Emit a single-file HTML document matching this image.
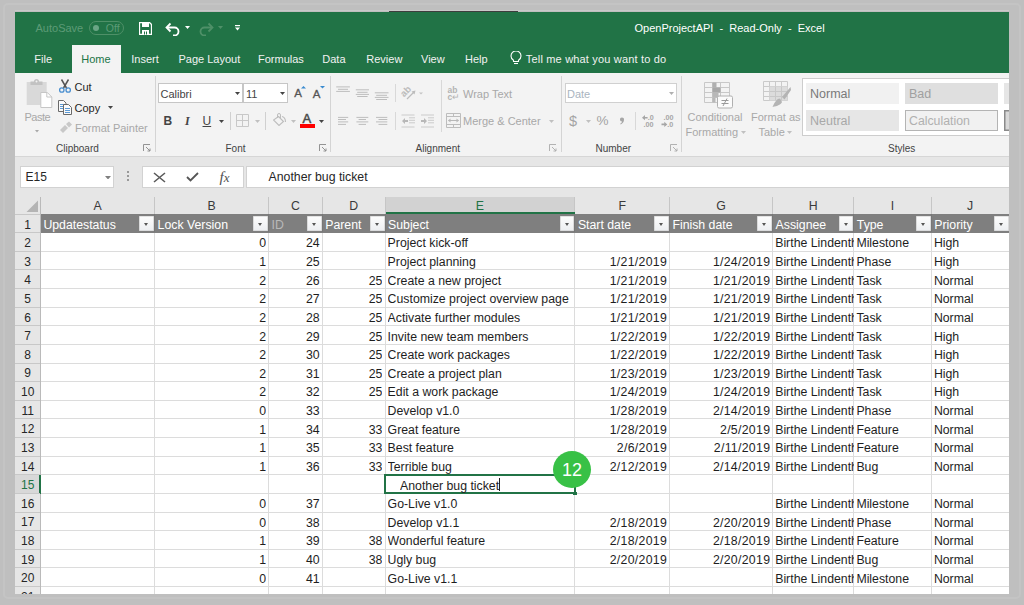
<!DOCTYPE html>
<html><head><meta charset="utf-8">
<style>
html,body{margin:0;padding:0}
body{width:1024px;height:605px;background:#bfbfbf;position:relative;overflow:hidden;font-family:"Liberation Sans",sans-serif}
#win{position:absolute;left:15px;top:12px;width:994px;height:582px;overflow:hidden;background:#e6e6e6}
#in{position:absolute;left:-15px;top:-12px;width:1024px;height:605px}
#in div,#in span,#in svg{position:absolute}
.t{white-space:nowrap;line-height:14px}
.tab{top:52px;font-size:11px;color:#f2f2f2;white-space:nowrap;line-height:14px}
.rl{font-size:11px;color:#444;white-space:nowrap;line-height:14px}
.dis{color:#a8a8a8}
.gl{font-size:10px;color:#444;white-space:nowrap;line-height:12px;top:143px}
.gsep{top:76px;width:1px;height:76px;background:#d4d4d4}
.launch{top:144px}
.colhdr{left:15px;top:188px;width:994px;height:26px;background:#e6e6e6}
.clet{top:199px;font-size:12.3px;line-height:14px;text-align:center}
.vsep{top:197px;width:1px;height:17px;background:#c6c6c6}
.hl{left:40px;width:969px;height:1px;background:#dcdcdc}
.vl{top:232.8px;width:1px;height:362px;background:#dcdcdc}
.rnum{left:15px;width:25.4px;font-size:12px;line-height:16px;text-align:center}
.rsep{left:15px;width:25px;height:1px;background:#c8c8c8}
.hcell{top:217.5px;font-size:12.3px;line-height:14px;white-space:nowrap}
.dd{top:216.3px;width:14.8px;height:15px;background:linear-gradient(#fdfdfd,#eceef1);box-shadow:inset 0 0 0 0.6px #c9c9c9}
.dd i{position:absolute;left:5px;top:6.5px;width:0;height:0;border-left:2.6px solid transparent;border-right:2.6px solid transparent;border-top:3px solid #555}
.cell{font-size:12.3px;line-height:14px;white-space:nowrap;overflow:hidden;color:#1e1e1e}
</style></head><body>
<div style="position:absolute;left:3px;top:3px;width:1014px;height:592px;border:2px solid #c4c4c4;border-radius:5px"></div>
<div style="position:absolute;left:389px;top:11px;width:129px;height:1px;background:#3d3d3d"></div>
<div style="position:absolute;left:15px;top:10px;width:994px;height:1px;background:#c9c9c9"></div>
<div id="win"><div id="in">
<!-- title bar + tabs -->
<div style="left:15px;top:12px;width:994px;height:61px;background:#217346"></div>
<div class="t" style="left:35.5px;top:21px;font-size:11px;color:#5d9b77">AutoSave</div>
<div style="left:88.5px;top:20.5px;width:33px;height:12px;border:1px solid #4f9068;border-radius:8px"></div>
<div style="left:92.8px;top:24.5px;width:6px;height:6px;border-radius:50%;background:#6aa585"></div>
<div class="t" style="left:105.8px;top:21px;font-size:10.5px;color:#5d9b77">Off</div>
<!-- save icon -->
<svg style="left:139px;top:22px" width="13" height="13" viewBox="0 0 13 13"><path d="M0.5 0.5h10l2 2v10h-12z" fill="none" stroke="#fff" stroke-width="1.3"/><rect x="3" y="1" width="7" height="4" fill="#fff"/><rect x="3" y="8" width="7" height="4.5" fill="#fff"/><rect x="5" y="9.5" width="1" height="3" fill="#217346"/><rect x="7" y="9.5" width="1" height="3" fill="#217346"/></svg>
<!-- undo -->
<svg style="left:165px;top:22px" width="16" height="14" viewBox="0 0 16 14"><path d="M2 5.5h7.5a4 4 0 0 1 0 8h-1.5" fill="none" stroke="#fff" stroke-width="1.8"/><path d="M5.5 1.5L1.5 5.5l4 4" fill="none" stroke="#fff" stroke-width="1.8"/></svg>
<svg style="left:185px;top:26px" width="5" height="3"><polygon points="0,0 5,0 2.5,3" fill="#fff"/></svg>
<!-- redo faded -->
<svg style="left:198px;top:22px" width="16" height="14" viewBox="0 0 16 14"><path d="M14 5.5h-7.5a4 4 0 0 0 0 8h1.5" fill="none" stroke="#4f9068" stroke-width="1.8"/><path d="M10.5 1.5l4 4-4 4" fill="none" stroke="#4f9068" stroke-width="1.8"/></svg>
<svg style="left:218px;top:26px" width="5" height="3"><polygon points="0,0 5,0 2.5,3" fill="#4f9068"/></svg>
<!-- qat customize -->
<svg style="left:234.5px;top:25px" width="5" height="6"><rect x="0" y="0" width="5" height="1.2" fill="#fff"/><polygon points="0,2.5 5,2.5 2.5,5.5" fill="#fff"/></svg>
<div class="t" style="left:634.5px;top:21px;font-size:11px;color:#fff;word-spacing:0">OpenProjectAPI&nbsp; -&nbsp; Read-Only&nbsp; -&nbsp; Excel</div>

<div style="left:72.4px;top:45px;width:48.8px;height:28px;background:#f3f3f3"></div>
<div class="tab" style="left:34.3px">File</div>
<div class="tab" style="left:81.2px;color:#217346">Home</div>
<div class="tab" style="left:131.3px">Insert</div>
<div class="tab" style="left:178.5px">Page Layout</div>
<div class="tab" style="left:258px">Formulas</div>
<div class="tab" style="left:322.3px">Data</div>
<div class="tab" style="left:366.3px">Review</div>
<div class="tab" style="left:421px">View</div>
<div class="tab" style="left:465px">Help</div>
<svg style="left:509.5px;top:50.5px" width="12" height="14" viewBox="0 0 12 14"><path d="M3.5 10.5v-1.2C2 8.3 1 6.8 1 5a5 5 0 0 1 10 0c0 1.8-1 3.3-2.5 4.3v1.2z" fill="none" stroke="#fff" stroke-width="1.1"/><path d="M4 12.5h4" stroke="#fff" stroke-width="1.1"/></svg>
<div class="tab" style="left:525.8px;letter-spacing:0.18px">Tell me what you want to do</div>

<!-- ribbon -->
<div style="left:15px;top:73px;width:994px;height:83px;background:#f3f3f3"></div>
<div style="left:15px;top:155.5px;width:994px;height:1px;background:#d6d6d6"></div>

<!-- Clipboard group -->
<svg style="left:26px;top:78px" width="27" height="31" viewBox="0 0 27 31"><rect x="0.7" y="4" width="20" height="23" fill="#d9d9d9"/><path d="M4.5 7V3.5h3.5a2.5 2.5 0 0 1 5 0h3.5V7z" fill="#c2c2c2"/><circle cx="10.5" cy="3.5" r="1" fill="#f3f3f3"/><path d="M14.8 14.5h6.5l4.5 4.5v10.5h-11z" fill="#fff" stroke="#c6c6c6" stroke-width="1"/><path d="M20.8 14.5v4.5h5" fill="none" stroke="#c6c6c6" stroke-width="1"/></svg>
<div class="rl dis" style="left:24.5px;top:110px;letter-spacing:-0.5px">Paste</div>
<svg style="left:35px;top:130px" width="4" height="2.5"><polygon points="0,0 4,0 2,2.5" fill="#a8a8a8"/></svg>
<svg style="left:58px;top:79px" width="14" height="14" viewBox="0 0 14 14"><path d="M3.5 0.5l5 8.5M10.5 0.5L5.5 9" stroke="#555" stroke-width="1.5" fill="none"/><circle cx="3.8" cy="11" r="2.2" fill="none" stroke="#4a8fd0" stroke-width="1.3"/><circle cx="10.2" cy="11" r="2.2" fill="none" stroke="#4a8fd0" stroke-width="1.3"/></svg>
<div class="rl" style="left:74.5px;top:79.5px;color:#262626">Cut</div>
<svg style="left:58px;top:99.5px" width="15" height="15" viewBox="0 0 15 15"><path d="M0.5 0.5h5l2.5 2.5v8.5h-7.5z" fill="#fafafa" stroke="#6a6a6a" stroke-width="1"/><path d="M2 4.5h4M2 6.5h4M2 8.5h4" stroke="#4a8fd0" stroke-width="0.9"/><path d="M5.5 4.5h5l3 3v7h-8z" fill="#fafafa" stroke="#6a6a6a" stroke-width="1"/><path d="M7 8.5h5M7 10.5h5M7 12.5h5" stroke="#4a8fd0" stroke-width="0.9"/></svg>
<div class="rl" style="left:74.5px;top:100.5px;color:#262626">Copy</div>
<svg style="left:108px;top:106px" width="5" height="3"><polygon points="0,0 5,0 2.5,3" fill="#444"/></svg>
<svg style="left:59px;top:121px" width="14" height="13" viewBox="0 0 14 13"><path d="M1 9l5-5 3 3-5 5z" fill="#c8c8c8"/><path d="M7 3l3-2.5 3 3-3 3z" fill="#c8c8c8"/></svg>
<div class="rl dis" style="left:75px;top:121px">Format Painter</div>
<div class="gl" style="left:56px">Clipboard</div>
<svg class="launch" style="left:143px;top:144px" width="8" height="8"><path d="M0.5 7V0.5H7M3 3l4 4M4.5 7H7V4.5" fill="none" stroke="#888" stroke-width="0.9"/></svg>
<div class="gsep" style="left:155px"></div>

<!-- Font group -->
<div style="left:158px;top:83px;width:85px;height:20px;background:#fff;box-shadow:inset 0 0 0 1px #c6c6c6"></div>
<div style="left:243px;top:83px;width:44.5px;height:20px;background:#fff;box-shadow:inset 0 0 0 1px #c6c6c6"></div>
<div class="t" style="left:160.5px;top:87px;font-size:11px;color:#444">Calibri</div>
<svg style="left:235px;top:92px" width="5" height="3"><polygon points="0,0 5,0 2.5,3" fill="#444"/></svg>
<div class="t" style="left:246px;top:87px;font-size:11px;color:#444">11</div>
<svg style="left:279.5px;top:92px" width="5" height="3"><polygon points="0,0 5,0 2.5,3" fill="#444"/></svg>
<div class="t" style="left:294.2px;top:86px;font-size:11.5px;color:#555;-webkit-text-stroke:0.3px #555">A</div>
<svg style="left:301px;top:86px" width="5" height="2.5"><polygon points="0,2.5 5,2.5 2.5,0" fill="#3b8bd0"/></svg>
<div class="t" style="left:312.7px;top:86.5px;font-size:11.5px;color:#555;-webkit-text-stroke:0.3px #555">A</div>
<svg style="left:319.5px;top:86px" width="5" height="2.5"><polygon points="0,0 5,0 2.5,2.5" fill="#3b8bd0"/></svg>
<div class="t" style="left:163.5px;top:114px;font-size:12px;color:#444;font-weight:bold">B</div>
<div class="t" style="left:185px;top:114px;font-size:12px;color:#444;font-style:italic;font-weight:bold;font-family:'Liberation Serif'">I</div>
<div class="t" style="left:202.5px;top:114px;font-size:12px;color:#444;text-decoration:underline">U</div>
<svg style="left:218.5px;top:120px" width="5" height="3"><polygon points="0,0 5,0 2.5,3" fill="#444"/></svg>
<div style="left:229.5px;top:112px;width:1px;height:18px;background:#d0d0d0"></div>
<svg style="left:235.5px;top:114px" width="13" height="13" viewBox="0 0 13 13"><path d="M0.5 0.5h12v12h-12zM6.5 0.5v12M0.5 6.5h12" fill="none" stroke="#c8c8c8" stroke-width="1"/></svg>
<svg style="left:254.5px;top:120px" width="5" height="3"><polygon points="0,0 5,0 2.5,3" fill="#c0c0c0"/></svg>
<div style="left:265px;top:112px;width:1px;height:18px;background:#d0d0d0"></div>
<svg style="left:273px;top:112.5px" width="14" height="13" viewBox="0 0 14 13"><path d="M5.5 3.5l5 5-4.5 4-5.5-5.5z" fill="none" stroke="#bdbdbd" stroke-width="1.1"/><path d="M4.5 5V2a1.5 1.5 0 0 1 3 0v3" fill="none" stroke="#bdbdbd" stroke-width="1"/><path d="M9 3.5c2 0.5 3.5 2.5 3.5 5.5" fill="none" stroke="#bdbdbd" stroke-width="1.1"/></svg>
<svg style="left:290.5px;top:120px" width="5" height="3"><polygon points="0,0 5,0 2.5,3" fill="#c0c0c0"/></svg>
<div class="t" style="left:302.5px;top:112.3px;font-size:13px;color:#4a4a4a;-webkit-text-stroke:0.5px #4a4a4a">A</div>
<div style="left:299.7px;top:124.3px;width:15px;height:3.5px;background:#ff0000"></div>
<svg style="left:319px;top:120px" width="5" height="3"><polygon points="0,0 5,0 2.5,3" fill="#444"/></svg>
<div class="gl" style="left:225.5px">Font</div>
<svg style="left:318.5px;top:144px" width="8" height="8"><path d="M0.5 7V0.5H7M3 3l4 4M4.5 7H7V4.5" fill="none" stroke="#888" stroke-width="0.9"/></svg>
<div class="gsep" style="left:330px"></div>

<!-- Alignment group -->
<svg style="left:330px;top:80px" width="65" height="22" viewBox="0 0 65 22"><path d="M6.2 6.9H19.9M8 9.3H18M6.2 11.4H19.9M25.8 9.8H39M27.2 12.3H37.6M25.8 14.4H39M27.2 16.5H37.6M44.8 12.8H58.5M46.2 15.3H57M44.8 17.4H58.5M46.2 19.5H57" stroke="#bdbdbd" stroke-width="1"/></svg>
<div style="left:394.5px;top:84px;width:1px;height:18px;background:#d8d8d8"></div>
<svg style="left:400px;top:83px" width="24" height="18" viewBox="0 0 24 18"><text x="0" y="0" transform="translate(4,14.5) rotate(-45)" font-family="Liberation Sans" font-size="9.5" font-weight="bold" fill="#bcbcbc">ab</text><path d="M7 16L14.5 8.5" stroke="#bcbcbc" stroke-width="1.2"/><polygon points="15.5,7.5 11.5,8.5 14.5,11.5" fill="#bcbcbc"/><polygon points="19,9.5 23,9.5 21,11.5" fill="#c4c4c4"/></svg>
<div style="left:440.5px;top:80px;width:1px;height:52px;background:#d8d8d8"></div>
<div class="t" style="left:447.5px;top:86.5px;font-size:8.5px;color:#b4b4b4;line-height:7.5px;font-weight:bold">ab<br>c<span style="position:static;font-weight:normal;font-size:8.5px">↵</span></div>
<div class="rl dis" style="left:463px;top:87px">Wrap Text</div>
<svg style="left:330px;top:110px" width="65" height="18" viewBox="0 0 65 18"><path d="M8 7.4H18.2M8 9.5H16M8 11.9H18.2M8 14.4H16M26.4 7.4H38.3M28.6 9.5H36M26.4 11.9H38.3M28.6 14.4H36M46 7.4H57.3M48.5 9.5H57.3M46 11.9H57.3M48.5 14.4H57.3" stroke="#bdbdbd" stroke-width="1"/></svg>
<div style="left:394.5px;top:112px;width:1px;height:18px;background:#d8d8d8"></div>
<svg style="left:401px;top:114px" width="35" height="14" viewBox="0 0 35 14"><path d="M0.5 1h13M0.5 13h13M8 3.8h6M8 6.3h6M8 8.8h6" stroke="#c0c0c0" stroke-width="0.8" fill="none"/><path d="M1 7l3-3v2h3v2h-3v2z" fill="#b8b8b8"/><path d="M20 1h13M20 13h13M27 3.8h6M27 6.3h6M27 8.8h6" stroke="#c0c0c0" stroke-width="0.8" fill="none"/><path d="M26 7l-3-3v2h-3v2h3v2z" fill="#b8b8b8"/></svg>
<svg style="left:445.5px;top:113px" width="15" height="15" viewBox="0 0 15 15"><path d="M0.5 0.5h14v14h-14zM0.5 3.5h14M0.5 11.5h14M7.5 0.5v3M7.5 11.5v3" fill="none" stroke="#bdbdbd" stroke-width="1"/><path d="M2.5 7.5h10" stroke="#b8b8b8" stroke-width="1"/><path d="M2 7.5l2.5-2v4zM13 7.5l-2.5-2v4z" fill="#b8b8b8"/></svg>
<div class="rl dis" style="left:463px;top:114px">Merge &amp; Center</div>
<svg style="left:548.5px;top:120px" width="5" height="3"><polygon points="0,0 5,0 2.5,3" fill="#c0c0c0"/></svg>
<div class="gl" style="left:415.5px">Alignment</div>
<svg style="left:549px;top:144px" width="8" height="8"><path d="M0.5 7V0.5H7M3 3l4 4M4.5 7H7V4.5" fill="none" stroke="#aaa" stroke-width="0.9"/></svg>
<div class="gsep" style="left:560.5px"></div>

<!-- Number group -->
<div style="left:564.5px;top:83px;width:112.5px;height:20px;background:#fff;box-shadow:inset 0 0 0 1px #d0d0d0"></div>
<div class="t" style="left:567px;top:87px;font-size:11px;color:#a9b4c0">Date</div>
<svg style="left:668.5px;top:92px" width="5" height="3"><polygon points="0,0 5,0 2.5,3" fill="#b0b0b0"/></svg>
<div class="t" style="left:569px;top:112.5px;font-size:14.5px;line-height:16px;color:#a4a4a4">$</div>
<svg style="left:585.5px;top:120px" width="5" height="3"><polygon points="0,0 5,0 2.5,3" fill="#c0c0c0"/></svg>
<div class="t" style="left:596.5px;top:114px;font-size:13.5px;color:#a4a4a4">%</div>
<svg style="left:619px;top:116.5px" width="6" height="8" viewBox="0 0 6 8"><path d="M2.8 0.5a2 2 0 0 1 2.2 2.3c0 2-1.3 3.8-3.3 4.7l-0.5-0.8c1-0.6 1.7-1.4 1.8-2.3a1.9 1.9 0 1 1-0.2-3.9z" fill="#a6a6a6"/></svg>
<div style="left:635px;top:112px;width:1px;height:18px;background:#d8d8d8"></div>

<svg style="left:641px;top:114px" width="34" height="14" viewBox="0 0 34 14"><g fill="#a6a6a6" font-family="Liberation Sans" font-size="7.2" font-weight="bold"><path d="M1 3.7l3-2.6v1.8h2.6v1.6H4v1.8z"/><text x="6.8" y="6">.0</text><text x="2.6" y="12.8">.00</text><text x="22.4" y="6">.00</text><path d="M26.3 10.4l-3-2.6v1.8h-2.8v1.6h2.8v1.8z"/><text x="26.2" y="12.8">.0</text></g></svg>
<div class="gl" style="left:595.5px">Number</div>
<svg style="left:669.5px;top:144px" width="8" height="8"><path d="M0.5 7V0.5H7M3 3l4 4M4.5 7H7V4.5" fill="none" stroke="#aaa" stroke-width="0.9"/></svg>
<div class="gsep" style="left:680.5px"></div>

<!-- Styles group -->
<svg style="left:703.5px;top:81.5px" width="29" height="27" viewBox="0 0 29 27"><path d="M0.5 0.5h25v20h-25zM0.5 5.5h25M0.5 10.5h25M0.5 15.5h25M8.5 0.5v20M16.5 0.5v20" fill="none" stroke="#c8c8c8" stroke-width="1"/><rect x="8.5" y="0.5" width="4" height="5" fill="#b0b0b0"/><rect x="8.5" y="5.5" width="8" height="5" fill="#a8a8a8"/><rect x="8.5" y="10.5" width="6" height="5" fill="#b8b8b8"/><rect x="8.5" y="15.5" width="3" height="5" fill="#b8b8b8"/><rect x="13.5" y="14" width="15" height="12" rx="1.5" fill="#fbfbfb" stroke="#b0b0b0" stroke-width="1"/><path d="M17.5 18.5h7M17.5 21.5h7M23 16.5l-4 7.5" stroke="#999" stroke-width="1"/></svg>
<div class="rl dis" style="left:687.5px;top:110px">Conditional</div>
<div class="rl dis" style="left:685.5px;top:124.5px">Formatting</div>
<svg style="left:741px;top:130.5px" width="5" height="3"><polygon points="0,0 5,0 2.5,3" fill="#c0c0c0"/></svg>
<svg style="left:763px;top:81px" width="28" height="27" viewBox="0 0 28 27"><path d="M0.5 0.5h24v19h-24zM0.5 5.5h24M0.5 10.5h24M0.5 15.5h24M6.5 0.5v19M12.5 0.5v19M18.5 0.5v19" fill="none" stroke="#cacaca" stroke-width="1"/><rect x="6.5" y="5.5" width="18" height="14" fill="#dcdcdc"/><path d="M6.5 10.5h18M6.5 15.5h18M12.5 5.5v14M18.5 5.5v14" stroke="#c8c8c8" stroke-width="1"/><path d="M27.5 6L19 16l2.5 2.5L28 9z" fill="#b4b4b4"/><path d="M17 17.5c-3 0-5 3-7.5 8.5 5-1 8.5-2.5 9.5-5z" fill="#b4b4b4"/></svg>
<div class="rl dis" style="left:751px;top:110px">Format as</div>
<div class="rl dis" style="left:758.5px;top:124.5px">Table</div>
<svg style="left:787px;top:130.5px" width="5" height="3"><polygon points="0,0 5,0 2.5,3" fill="#c0c0c0"/></svg>

<div style="left:802px;top:77.5px;width:220px;height:58px;background:#fff;box-shadow:inset 0 0 0 1px #cdcdcd"></div>
<div style="left:806px;top:82.5px;width:93px;height:21px;background:#f1f1f1"></div>
<div class="t" style="left:810px;top:87px;font-size:12.5px;color:#7a7a7a">Normal</div>
<div style="left:905px;top:82.5px;width:93px;height:21px;background:#dfdfdf"></div>
<div class="t" style="left:909px;top:87px;font-size:12.5px;color:#a0a0a0">Bad</div>
<div style="left:1004px;top:82.5px;width:10px;height:21px;background:#e6e6e6"></div>
<div style="left:806px;top:110px;width:93px;height:21px;background:#e6e6e6"></div>
<div class="t" style="left:810px;top:114px;font-size:12.5px;color:#a8a8a8">Neutral</div>
<div style="left:905px;top:110px;width:93px;height:21px;background:#f1f1f1;box-shadow:inset 0 0 0 1px #b4b4b4"></div>
<div class="t" style="left:909px;top:114px;font-size:12.3px;color:#b0b0b0">Calculation</div>
<div style="left:1004px;top:110px;width:10px;height:21px;background:#d8d8d8;box-shadow:inset 0 0 0 1.5px #8a8a8a"></div>
<div class="gl" style="left:888px">Styles</div>

<!-- formula bar -->
<div style="left:20.3px;top:165.5px;width:94px;height:22px;background:#fff;box-shadow:inset 0 0 0 1px #d2d2d2"></div>
<div class="t" style="left:25.5px;top:170px;font-size:12px;color:#262626">E15</div>
<svg style="left:104.5px;top:175.5px" width="6" height="3.5"><polygon points="0,0 6,0 3,3.5" fill="#808080"/></svg>
<div style="left:127px;top:171px;width:2px;height:2px;background:#999"></div>
<div style="left:127px;top:175px;width:2px;height:2px;background:#999"></div>
<div style="left:127px;top:179px;width:2px;height:2px;background:#999"></div>
<div style="left:142px;top:165.5px;width:101.5px;height:22px;background:#fff;box-shadow:inset 0 0 0 1px #d2d2d2"></div>
<svg style="left:152.5px;top:171.5px" width="13" height="11" viewBox="0 0 13 11"><path d="M1 1l11 9M12 1L1 10" stroke="#5a5a5a" stroke-width="1.6"/></svg>
<svg style="left:186px;top:172px" width="13" height="10" viewBox="0 0 13 10"><path d="M1 5l3.5 3.5L12 1" fill="none" stroke="#555" stroke-width="1.8"/></svg>
<div class="t" style="left:219.5px;top:167.5px;font-size:15px;line-height:18px;color:#505050;font-family:'Liberation Serif';font-style:italic">f<span style="position:static;font-size:13px;margin-left:0px">x</span></div>
<div style="left:246.3px;top:165.5px;width:800px;height:22px;background:#fff;box-shadow:inset 0 0 0 1px #d2d2d2"></div>
<div class="t" style="left:268.5px;top:170px;font-size:12.3px;color:#262626">Another bug ticket</div>

<div class="colhdr"></div>
<div style="position:absolute;left:385.5px;top:197px;width:189.4px;height:17px;background:#d2d2d2"></div>
<div style="position:absolute;left:385.5px;top:212.5px;width:189.4px;height:2px;background:#217346"></div>
<div class="clet" style="left:40.4px;width:114.2px;color:#3a3a3a">A</div>
<div class="clet" style="left:154.6px;width:114px;color:#3a3a3a">B</div>
<div class="vsep" style="left:154.1px"></div>
<div class="clet" style="left:268.6px;width:53.6px;color:#3a3a3a">C</div>
<div class="vsep" style="left:268.1px"></div>
<div class="clet" style="left:322.2px;width:62.8px;color:#3a3a3a">D</div>
<div class="vsep" style="left:321.7px"></div>
<div class="clet" style="left:385px;width:189.9px;color:#217346">E</div>
<div class="vsep" style="left:384.5px"></div>
<div class="clet" style="left:574.9px;width:94.5px;color:#3a3a3a">F</div>
<div class="vsep" style="left:574.4px"></div>
<div class="clet" style="left:669.4px;width:103.2px;color:#3a3a3a">G</div>
<div class="vsep" style="left:668.9px"></div>
<div class="clet" style="left:772.6px;width:81.2px;color:#3a3a3a">H</div>
<div class="vsep" style="left:772.1px"></div>
<div class="clet" style="left:853.8px;width:77.5px;color:#3a3a3a">I</div>
<div class="vsep" style="left:853.3px"></div>
<div class="clet" style="left:931.3px;width:77.7px;color:#3a3a3a">J</div>
<div class="vsep" style="left:930.8px"></div>
<svg style="position:absolute;left:26px;top:199.5px" width="13" height="13"><polygon points="12,0.5 12,12 0.5,12" fill="#b4b4b4"/></svg>
<div style="position:absolute;left:15px;top:213.6px;width:994px;height:1px;background:#c8c8c8"></div>
<div style="position:absolute;left:385.5px;top:212.3px;width:189.4px;height:2px;background:#217346"></div>
<div style="position:absolute;left:40.4px;top:214.1px;width:968.6px;height:18.7px;background:#7f7f7f"></div>
<div style="position:absolute;left:40.4px;top:232.8px;width:968.6px;height:362px;background:#fff"></div>
<div class="hl" style="top:250.82px"></div>
<div class="hl" style="top:269.45px"></div>
<div class="hl" style="top:288.07px"></div>
<div class="hl" style="top:306.7px"></div>
<div class="hl" style="top:325.32px"></div>
<div class="hl" style="top:343.95px"></div>
<div class="hl" style="top:362.57px"></div>
<div class="hl" style="top:381.2px"></div>
<div class="hl" style="top:399.82px"></div>
<div class="hl" style="top:418.45px"></div>
<div class="hl" style="top:437.07px"></div>
<div class="hl" style="top:455.7px"></div>
<div class="hl" style="top:474.32px"></div>
<div class="hl" style="top:492.95px"></div>
<div class="hl" style="top:511.58px"></div>
<div class="hl" style="top:530.2px"></div>
<div class="hl" style="top:548.83px"></div>
<div class="hl" style="top:567.45px"></div>
<div class="hl" style="top:586.08px"></div>
<div class="vl" style="left:154.1px"></div>
<div class="vl" style="left:268.1px"></div>
<div class="vl" style="left:321.7px"></div>
<div class="vl" style="left:384.5px"></div>
<div class="vl" style="left:574.4px"></div>
<div class="vl" style="left:668.9px"></div>
<div class="vl" style="left:772.1px"></div>
<div class="vl" style="left:853.3px"></div>
<div class="vl" style="left:930.8px"></div>
<div style="position:absolute;left:15px;top:214.6px;width:25.4px;height:380px;background:#e6e6e6"></div>
<div style="position:absolute;left:40px;top:197px;width:1px;height:397px;background:#bababa"></div>
<div class="rnum" style="top:217.2px;color:#262626">1</div>
<div class="rsep" style="top:232.2px"></div>
<div class="rnum" style="top:235.01px;color:#262626">2</div>
<div class="rsep" style="top:250.82px"></div>
<div class="rnum" style="top:253.64px;color:#262626">3</div>
<div class="rsep" style="top:269.45px"></div>
<div class="rnum" style="top:272.26px;color:#262626">4</div>
<div class="rsep" style="top:288.07px"></div>
<div class="rnum" style="top:290.89px;color:#262626">5</div>
<div class="rsep" style="top:306.7px"></div>
<div class="rnum" style="top:309.51px;color:#262626">6</div>
<div class="rsep" style="top:325.32px"></div>
<div class="rnum" style="top:328.14px;color:#262626">7</div>
<div class="rsep" style="top:343.95px"></div>
<div class="rnum" style="top:346.76px;color:#262626">8</div>
<div class="rsep" style="top:362.57px"></div>
<div class="rnum" style="top:365.39px;color:#262626">9</div>
<div class="rsep" style="top:381.2px"></div>
<div class="rnum" style="top:384.01px;color:#262626">10</div>
<div class="rsep" style="top:399.82px"></div>
<div class="rnum" style="top:402.64px;color:#262626">11</div>
<div class="rsep" style="top:418.45px"></div>
<div class="rnum" style="top:421.26px;color:#262626">12</div>
<div class="rsep" style="top:437.07px"></div>
<div class="rnum" style="top:439.89px;color:#262626">13</div>
<div class="rsep" style="top:455.7px"></div>
<div class="rnum" style="top:458.51px;color:#262626">14</div>
<div class="rsep" style="top:474.32px"></div>
<div style="position:absolute;left:15px;top:475.32px;width:24px;height:18.12px;background:#d8d8d8"></div>
<div style="position:absolute;left:38.6px;top:475.32px;width:2.2px;height:18.62px;background:#217346"></div>
<div class="rnum" style="top:477.14px;color:#217346">15</div>
<div class="rsep" style="top:492.95px"></div>
<div class="rnum" style="top:495.76px;color:#262626">16</div>
<div class="rsep" style="top:511.58px"></div>
<div class="rnum" style="top:514.39px;color:#262626">17</div>
<div class="rsep" style="top:530.2px"></div>
<div class="rnum" style="top:533.01px;color:#262626">18</div>
<div class="rsep" style="top:548.83px"></div>
<div class="rnum" style="top:551.64px;color:#262626">19</div>
<div class="rsep" style="top:567.45px"></div>
<div class="rnum" style="top:570.26px;color:#262626">20</div>
<div class="rsep" style="top:586.08px"></div>
<div class="rnum" style="top:588.89px;color:#262626">21</div>
<div class="rsep" style="top:604.7px"></div>
<div class="hcell" style="left:43.4px;color:#fff">Updatestatus</div>
<div class="dd" style="left:139.4px"><i></i></div>
<div class="hcell" style="left:157.6px;color:#fff">Lock Version</div>
<div class="dd" style="left:253.4px"><i></i></div>
<div style="position:absolute;left:154.1px;top:214.1px;width:1px;height:18px;background:#777"></div>
<div class="hcell" style="left:271.6px;color:#b9b9b9">ID</div>
<div class="dd" style="left:307px"><i></i></div>
<div style="position:absolute;left:268.1px;top:214.1px;width:1px;height:18px;background:#777"></div>
<div class="hcell" style="left:325.2px;color:#fff">Parent</div>
<div class="dd" style="left:369.8px"><i></i></div>
<div style="position:absolute;left:321.7px;top:214.1px;width:1px;height:18px;background:#777"></div>
<div class="hcell" style="left:388px;color:#fff">Subject</div>
<div class="dd" style="left:559.7px"><i></i></div>
<div style="position:absolute;left:384.5px;top:214.1px;width:1px;height:18px;background:#777"></div>
<div class="hcell" style="left:577.9px;color:#fff">Start date</div>
<div class="dd" style="left:654.2px"><i></i></div>
<div style="position:absolute;left:574.4px;top:214.1px;width:1px;height:18px;background:#777"></div>
<div class="hcell" style="left:672.4px;color:#fff">Finish date</div>
<div class="dd" style="left:757.4px"><i></i></div>
<div style="position:absolute;left:668.9px;top:214.1px;width:1px;height:18px;background:#777"></div>
<div class="hcell" style="left:775.6px;color:#fff">Assignee</div>
<div class="dd" style="left:838.6px"><i></i></div>
<div style="position:absolute;left:772.1px;top:214.1px;width:1px;height:18px;background:#777"></div>
<div class="hcell" style="left:856.8px;color:#fff">Type</div>
<div class="dd" style="left:916.1px"><i></i></div>
<div style="position:absolute;left:853.3px;top:214.1px;width:1px;height:18px;background:#777"></div>
<div class="hcell" style="left:934.3px;color:#fff">Priority</div>
<div class="dd" style="left:993.8px"><i></i></div>
<div style="position:absolute;left:930.8px;top:214.1px;width:1px;height:18px;background:#777"></div>
<div class="cell" style="left:154.6px;top:236.4px;width:111.4px;text-align:right">0</div>
<div class="cell" style="left:268.6px;top:236.4px;width:51px;text-align:right">24</div>
<div class="cell" style="left:387.6px;top:236.4px;width:187.3px">Project kick-off</div>
<div class="cell" style="left:775.2px;top:236.4px;width:78.6px">Birthe Lindenthal</div>
<div class="cell" style="left:856.4px;top:236.4px;width:74.9px">Milestone</div>
<div class="cell" style="left:933.9px;top:236.4px;width:75.1px">High</div>
<div class="cell" style="left:154.6px;top:255.02px;width:111.4px;text-align:right">1</div>
<div class="cell" style="left:268.6px;top:255.02px;width:51px;text-align:right">25</div>
<div class="cell" style="left:387.6px;top:255.02px;width:187.3px">Project planning</div>
<div class="cell" style="left:574.9px;top:255.02px;width:92.2px;text-align:right;letter-spacing:0.3px">1/21/2019</div>
<div class="cell" style="left:669.4px;top:255.02px;width:100.9px;text-align:right;letter-spacing:0.3px">1/24/2019</div>
<div class="cell" style="left:775.2px;top:255.02px;width:78.6px">Birthe Lindenthal</div>
<div class="cell" style="left:856.4px;top:255.02px;width:74.9px">Phase</div>
<div class="cell" style="left:933.9px;top:255.02px;width:75.1px">High</div>
<div class="cell" style="left:154.6px;top:273.65px;width:111.4px;text-align:right">2</div>
<div class="cell" style="left:268.6px;top:273.65px;width:51px;text-align:right">26</div>
<div class="cell" style="left:322.2px;top:273.65px;width:60.2px;text-align:right">25</div>
<div class="cell" style="left:387.6px;top:273.65px;width:187.3px">Create a new project</div>
<div class="cell" style="left:574.9px;top:273.65px;width:92.2px;text-align:right;letter-spacing:0.3px">1/21/2019</div>
<div class="cell" style="left:669.4px;top:273.65px;width:100.9px;text-align:right;letter-spacing:0.3px">1/21/2019</div>
<div class="cell" style="left:775.2px;top:273.65px;width:78.6px">Birthe Lindenthal</div>
<div class="cell" style="left:856.4px;top:273.65px;width:74.9px">Task</div>
<div class="cell" style="left:933.9px;top:273.65px;width:75.1px">Normal</div>
<div class="cell" style="left:154.6px;top:292.27px;width:111.4px;text-align:right">2</div>
<div class="cell" style="left:268.6px;top:292.27px;width:51px;text-align:right">27</div>
<div class="cell" style="left:322.2px;top:292.27px;width:60.2px;text-align:right">25</div>
<div class="cell" style="left:387.6px;top:292.27px;width:187.3px">Customize project overview page</div>
<div class="cell" style="left:574.9px;top:292.27px;width:92.2px;text-align:right;letter-spacing:0.3px">1/21/2019</div>
<div class="cell" style="left:669.4px;top:292.27px;width:100.9px;text-align:right;letter-spacing:0.3px">1/21/2019</div>
<div class="cell" style="left:775.2px;top:292.27px;width:78.6px">Birthe Lindenthal</div>
<div class="cell" style="left:856.4px;top:292.27px;width:74.9px">Task</div>
<div class="cell" style="left:933.9px;top:292.27px;width:75.1px">Normal</div>
<div class="cell" style="left:154.6px;top:310.9px;width:111.4px;text-align:right">2</div>
<div class="cell" style="left:268.6px;top:310.9px;width:51px;text-align:right">28</div>
<div class="cell" style="left:322.2px;top:310.9px;width:60.2px;text-align:right">25</div>
<div class="cell" style="left:387.6px;top:310.9px;width:187.3px">Activate further modules</div>
<div class="cell" style="left:574.9px;top:310.9px;width:92.2px;text-align:right;letter-spacing:0.3px">1/21/2019</div>
<div class="cell" style="left:669.4px;top:310.9px;width:100.9px;text-align:right;letter-spacing:0.3px">1/21/2019</div>
<div class="cell" style="left:775.2px;top:310.9px;width:78.6px">Birthe Lindenthal</div>
<div class="cell" style="left:856.4px;top:310.9px;width:74.9px">Task</div>
<div class="cell" style="left:933.9px;top:310.9px;width:75.1px">Normal</div>
<div class="cell" style="left:154.6px;top:329.52px;width:111.4px;text-align:right">2</div>
<div class="cell" style="left:268.6px;top:329.52px;width:51px;text-align:right">29</div>
<div class="cell" style="left:322.2px;top:329.52px;width:60.2px;text-align:right">25</div>
<div class="cell" style="left:387.6px;top:329.52px;width:187.3px">Invite new team members</div>
<div class="cell" style="left:574.9px;top:329.52px;width:92.2px;text-align:right;letter-spacing:0.3px">1/22/2019</div>
<div class="cell" style="left:669.4px;top:329.52px;width:100.9px;text-align:right;letter-spacing:0.3px">1/22/2019</div>
<div class="cell" style="left:775.2px;top:329.52px;width:78.6px">Birthe Lindenthal</div>
<div class="cell" style="left:856.4px;top:329.52px;width:74.9px">Task</div>
<div class="cell" style="left:933.9px;top:329.52px;width:75.1px">High</div>
<div class="cell" style="left:154.6px;top:348.15px;width:111.4px;text-align:right">2</div>
<div class="cell" style="left:268.6px;top:348.15px;width:51px;text-align:right">30</div>
<div class="cell" style="left:322.2px;top:348.15px;width:60.2px;text-align:right">25</div>
<div class="cell" style="left:387.6px;top:348.15px;width:187.3px">Create work packages</div>
<div class="cell" style="left:574.9px;top:348.15px;width:92.2px;text-align:right;letter-spacing:0.3px">1/22/2019</div>
<div class="cell" style="left:669.4px;top:348.15px;width:100.9px;text-align:right;letter-spacing:0.3px">1/22/2019</div>
<div class="cell" style="left:775.2px;top:348.15px;width:78.6px">Birthe Lindenthal</div>
<div class="cell" style="left:856.4px;top:348.15px;width:74.9px">Task</div>
<div class="cell" style="left:933.9px;top:348.15px;width:75.1px">High</div>
<div class="cell" style="left:154.6px;top:366.77px;width:111.4px;text-align:right">2</div>
<div class="cell" style="left:268.6px;top:366.77px;width:51px;text-align:right">31</div>
<div class="cell" style="left:322.2px;top:366.77px;width:60.2px;text-align:right">25</div>
<div class="cell" style="left:387.6px;top:366.77px;width:187.3px">Create a project plan</div>
<div class="cell" style="left:574.9px;top:366.77px;width:92.2px;text-align:right;letter-spacing:0.3px">1/23/2019</div>
<div class="cell" style="left:669.4px;top:366.77px;width:100.9px;text-align:right;letter-spacing:0.3px">1/23/2019</div>
<div class="cell" style="left:775.2px;top:366.77px;width:78.6px">Birthe Lindenthal</div>
<div class="cell" style="left:856.4px;top:366.77px;width:74.9px">Task</div>
<div class="cell" style="left:933.9px;top:366.77px;width:75.1px">High</div>
<div class="cell" style="left:154.6px;top:385.4px;width:111.4px;text-align:right">2</div>
<div class="cell" style="left:268.6px;top:385.4px;width:51px;text-align:right">32</div>
<div class="cell" style="left:322.2px;top:385.4px;width:60.2px;text-align:right">25</div>
<div class="cell" style="left:387.6px;top:385.4px;width:187.3px">Edit a work package</div>
<div class="cell" style="left:574.9px;top:385.4px;width:92.2px;text-align:right;letter-spacing:0.3px">1/24/2019</div>
<div class="cell" style="left:669.4px;top:385.4px;width:100.9px;text-align:right;letter-spacing:0.3px">1/24/2019</div>
<div class="cell" style="left:775.2px;top:385.4px;width:78.6px">Birthe Lindenthal</div>
<div class="cell" style="left:856.4px;top:385.4px;width:74.9px">Task</div>
<div class="cell" style="left:933.9px;top:385.4px;width:75.1px">High</div>
<div class="cell" style="left:154.6px;top:404.02px;width:111.4px;text-align:right">0</div>
<div class="cell" style="left:268.6px;top:404.02px;width:51px;text-align:right">33</div>
<div class="cell" style="left:387.6px;top:404.02px;width:187.3px">Develop v1.0</div>
<div class="cell" style="left:574.9px;top:404.02px;width:92.2px;text-align:right;letter-spacing:0.3px">1/28/2019</div>
<div class="cell" style="left:669.4px;top:404.02px;width:100.9px;text-align:right;letter-spacing:0.3px">2/14/2019</div>
<div class="cell" style="left:775.2px;top:404.02px;width:78.6px">Birthe Lindenthal</div>
<div class="cell" style="left:856.4px;top:404.02px;width:74.9px">Phase</div>
<div class="cell" style="left:933.9px;top:404.02px;width:75.1px">Normal</div>
<div class="cell" style="left:154.6px;top:422.65px;width:111.4px;text-align:right">1</div>
<div class="cell" style="left:268.6px;top:422.65px;width:51px;text-align:right">34</div>
<div class="cell" style="left:322.2px;top:422.65px;width:60.2px;text-align:right">33</div>
<div class="cell" style="left:387.6px;top:422.65px;width:187.3px">Great feature</div>
<div class="cell" style="left:574.9px;top:422.65px;width:92.2px;text-align:right;letter-spacing:0.3px">1/28/2019</div>
<div class="cell" style="left:669.4px;top:422.65px;width:100.9px;text-align:right;letter-spacing:0.3px">2/5/2019</div>
<div class="cell" style="left:775.2px;top:422.65px;width:78.6px">Birthe Lindenthal</div>
<div class="cell" style="left:856.4px;top:422.65px;width:74.9px">Feature</div>
<div class="cell" style="left:933.9px;top:422.65px;width:75.1px">Normal</div>
<div class="cell" style="left:154.6px;top:441.27px;width:111.4px;text-align:right">1</div>
<div class="cell" style="left:268.6px;top:441.27px;width:51px;text-align:right">35</div>
<div class="cell" style="left:322.2px;top:441.27px;width:60.2px;text-align:right">33</div>
<div class="cell" style="left:387.6px;top:441.27px;width:187.3px">Best feature</div>
<div class="cell" style="left:574.9px;top:441.27px;width:92.2px;text-align:right;letter-spacing:0.3px">2/6/2019</div>
<div class="cell" style="left:669.4px;top:441.27px;width:100.9px;text-align:right;letter-spacing:0.3px">2/11/2019</div>
<div class="cell" style="left:775.2px;top:441.27px;width:78.6px">Birthe Lindenthal</div>
<div class="cell" style="left:856.4px;top:441.27px;width:74.9px">Feature</div>
<div class="cell" style="left:933.9px;top:441.27px;width:75.1px">Normal</div>
<div class="cell" style="left:154.6px;top:459.9px;width:111.4px;text-align:right">1</div>
<div class="cell" style="left:268.6px;top:459.9px;width:51px;text-align:right">36</div>
<div class="cell" style="left:322.2px;top:459.9px;width:60.2px;text-align:right">33</div>
<div class="cell" style="left:387.6px;top:459.9px;width:187.3px">Terrible bug</div>
<div class="cell" style="left:574.9px;top:459.9px;width:92.2px;text-align:right;letter-spacing:0.3px">2/12/2019</div>
<div class="cell" style="left:669.4px;top:459.9px;width:100.9px;text-align:right;letter-spacing:0.3px">2/14/2019</div>
<div class="cell" style="left:775.2px;top:459.9px;width:78.6px">Birthe Lindenthal</div>
<div class="cell" style="left:856.4px;top:459.9px;width:74.9px">Bug</div>
<div class="cell" style="left:933.9px;top:459.9px;width:75.1px">Normal</div>
<div class="cell" style="left:154.6px;top:497.15px;width:111.4px;text-align:right">0</div>
<div class="cell" style="left:268.6px;top:497.15px;width:51px;text-align:right">37</div>
<div class="cell" style="left:387.6px;top:497.15px;width:187.3px">Go-Live v1.0</div>
<div class="cell" style="left:775.2px;top:497.15px;width:78.6px">Birthe Lindenthal</div>
<div class="cell" style="left:856.4px;top:497.15px;width:74.9px">Milestone</div>
<div class="cell" style="left:933.9px;top:497.15px;width:75.1px">Normal</div>
<div class="cell" style="left:154.6px;top:515.78px;width:111.4px;text-align:right">0</div>
<div class="cell" style="left:268.6px;top:515.78px;width:51px;text-align:right">38</div>
<div class="cell" style="left:387.6px;top:515.78px;width:187.3px">Develop v1.1</div>
<div class="cell" style="left:574.9px;top:515.78px;width:92.2px;text-align:right;letter-spacing:0.3px">2/18/2019</div>
<div class="cell" style="left:669.4px;top:515.78px;width:100.9px;text-align:right;letter-spacing:0.3px">2/20/2019</div>
<div class="cell" style="left:775.2px;top:515.78px;width:78.6px">Birthe Lindenthal</div>
<div class="cell" style="left:856.4px;top:515.78px;width:74.9px">Phase</div>
<div class="cell" style="left:933.9px;top:515.78px;width:75.1px">Normal</div>
<div class="cell" style="left:154.6px;top:534.4px;width:111.4px;text-align:right">1</div>
<div class="cell" style="left:268.6px;top:534.4px;width:51px;text-align:right">39</div>
<div class="cell" style="left:322.2px;top:534.4px;width:60.2px;text-align:right">38</div>
<div class="cell" style="left:387.6px;top:534.4px;width:187.3px">Wonderful feature</div>
<div class="cell" style="left:574.9px;top:534.4px;width:92.2px;text-align:right;letter-spacing:0.3px">2/18/2019</div>
<div class="cell" style="left:669.4px;top:534.4px;width:100.9px;text-align:right;letter-spacing:0.3px">2/18/2019</div>
<div class="cell" style="left:775.2px;top:534.4px;width:78.6px">Birthe Lindenthal</div>
<div class="cell" style="left:856.4px;top:534.4px;width:74.9px">Feature</div>
<div class="cell" style="left:933.9px;top:534.4px;width:75.1px">Normal</div>
<div class="cell" style="left:154.6px;top:553.03px;width:111.4px;text-align:right">1</div>
<div class="cell" style="left:268.6px;top:553.03px;width:51px;text-align:right">40</div>
<div class="cell" style="left:322.2px;top:553.03px;width:60.2px;text-align:right">38</div>
<div class="cell" style="left:387.6px;top:553.03px;width:187.3px">Ugly bug</div>
<div class="cell" style="left:574.9px;top:553.03px;width:92.2px;text-align:right;letter-spacing:0.3px">2/20/2019</div>
<div class="cell" style="left:669.4px;top:553.03px;width:100.9px;text-align:right;letter-spacing:0.3px">2/20/2019</div>
<div class="cell" style="left:775.2px;top:553.03px;width:78.6px">Birthe Lindenthal</div>
<div class="cell" style="left:856.4px;top:553.03px;width:74.9px">Bug</div>
<div class="cell" style="left:933.9px;top:553.03px;width:75.1px">Normal</div>
<div class="cell" style="left:154.6px;top:571.65px;width:111.4px;text-align:right">0</div>
<div class="cell" style="left:268.6px;top:571.65px;width:51px;text-align:right">41</div>
<div class="cell" style="left:387.6px;top:571.65px;width:187.3px">Go-Live v1.1</div>
<div class="cell" style="left:775.2px;top:571.65px;width:78.6px">Birthe Lindenthal</div>
<div class="cell" style="left:856.4px;top:571.65px;width:74.9px">Milestone</div>
<div class="cell" style="left:933.9px;top:571.65px;width:75.1px">Normal</div>

<!-- active cell -->
<div style="left:384px;top:473.7px;width:191.5px;height:20.5px;box-sizing:border-box;border:2px solid #217346"></div>
<div class="cell" style="left:400px;top:478.5px;color:#1e1e1e">Another bug ticket</div>
<div style="left:498.5px;top:478px;width:1px;height:13px;background:#222"></div>
<div style="left:573px;top:491.5px;width:4px;height:3.5px;background:#217346"></div>
<!-- callout -->
<div style="left:553px;top:450.5px;width:38px;height:37px;border-radius:50%;background:#38c146"></div>
<div class="t" style="left:553px;top:460.8px;width:38px;text-align:center;font-size:18px;line-height:18px;color:#fff">12</div>
</div></div>
</body></html>
